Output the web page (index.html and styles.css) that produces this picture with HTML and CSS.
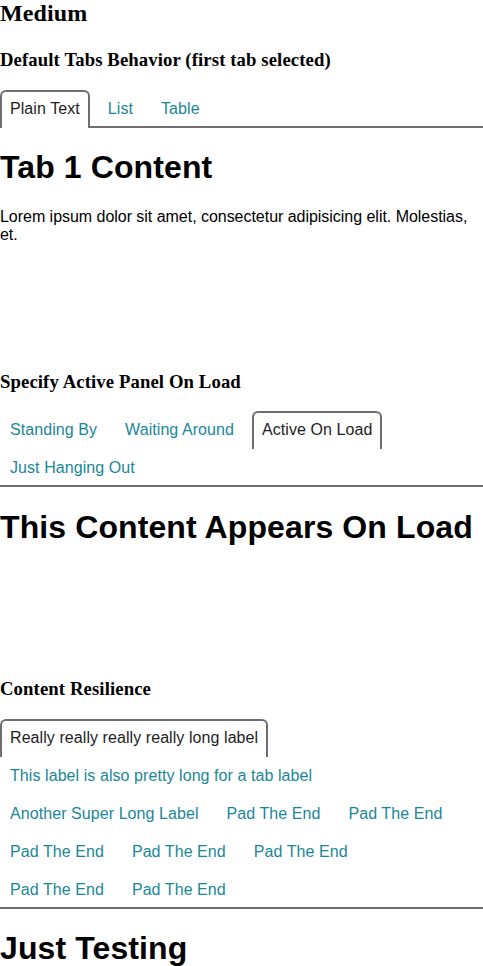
FILE: index.html
```html
<!DOCTYPE html>
<html lang="en">
<head>
<meta charset="utf-8">
<title>Tabs - Medium</title>
<link rel="stylesheet" href="styles.css">
</head>
<body>
<h2 class="page-title">Medium</h2>

<section class="demo">
  <h3 class="demo-title">Default Tabs Behavior (first tab selected)</h3>
  <div class="tabs">
    <div class="tablist" role="tablist">
      <button class="tab is-active" role="tab" aria-selected="true">Plain Text</button>
      <button class="tab" role="tab">List</button>
      <button class="tab" role="tab">Table</button>
    </div>
    <div class="panel" role="tabpanel">
      <h1 class="panel-title">Tab 1 Content</h1>
      <p class="panel-text">Lorem ipsum dolor sit amet, consectetur adipisicing elit. Molestias, et.</p>
    </div>
  </div>
</section>

<section class="demo">
  <h3 class="demo-title">Specify Active Panel On Load</h3>
  <div class="tabs">
    <div class="tablist" role="tablist">
      <button class="tab" role="tab">Standing By</button>
      <button class="tab" role="tab">Waiting Around</button>
      <button class="tab is-active" role="tab" aria-selected="true">Active On Load</button>
      <button class="tab" role="tab">Just Hanging Out</button>
    </div>
    <div class="panel" role="tabpanel">
      <h1 class="panel-title">This Content Appears On Load</h1>
    </div>
  </div>
</section>

<section class="demo">
  <h3 class="demo-title">Content Resilience</h3>
  <div class="tabs">
    <div class="tablist" role="tablist">
      <button class="tab is-active" role="tab" aria-selected="true">Really really really really long label</button>
      <button class="tab" role="tab">This label is also pretty long for a tab label</button>
      <button class="tab" role="tab">Another Super Long Label</button>
      <button class="tab" role="tab">Pad The End</button>
      <button class="tab" role="tab">Pad The End</button>
      <button class="tab" role="tab">Pad The End</button>
      <button class="tab" role="tab">Pad The End</button>
      <button class="tab" role="tab">Pad The End</button>
      <button class="tab" role="tab">Pad The End</button>
      <button class="tab" role="tab">Pad The End</button>
    </div>
    <div class="panel panel-last" role="tabpanel">
      <h1 class="panel-title">Just Testing</h1>
    </div>
  </div>
</section>
</body>
</html>
```

FILE: styles.css
```css
html, body {
  background: #ffffff;
}

body {
  margin: 0;
  color: #000000;
  font-family: "Liberation Serif", "Times New Roman", serif;
  letter-spacing: 0.0065em;
}

.page-title {
  margin: 0 0 22px;
  font-size: 24px;
  font-weight: bold;
}

.demo {
  margin-bottom: 111px;
}

.demo-title {
  margin: 18.72px 0;
  font-size: 18.72px;
  font-weight: bold;
}

.tablist {
  display: flex;
  flex-wrap: wrap;
  align-items: flex-start;
  row-gap: 2px;
  margin: 0;
  padding: 0;
  border-bottom: 2px solid #6f6f6f;
}

.tab {
  margin: 0 8px 0 0;
  padding: 8px 8px;
  border: 2px solid transparent;
  border-bottom: 0;
  border-radius: 6px 6px 0 0;
  background: transparent;
  color: #1a8797;
  font-family: "Liberation Sans", Arial, sans-serif;
  font-size: 16px;
  line-height: 18px;
  letter-spacing: 0.0045em;
  text-align: left;
  cursor: pointer;
  white-space: nowrap;
}

.tab.is-active {
  position: relative;
  z-index: 1;
  margin-bottom: -2px;
  padding-bottom: 10px;
  border-color: #6f6f6f;
  background: #ffffff;
  color: #1e1e1e;
}

.panel {
  display: flow-root;
  font-family: "Liberation Sans", Arial, sans-serif;
}

.panel-title {
  margin: 21.44px 0;
  font-size: 32px;
  font-weight: bold;
}

.panel-text {
  margin: 16px 0;
  font-size: 16px;
  letter-spacing: -0.002em;
}
```
